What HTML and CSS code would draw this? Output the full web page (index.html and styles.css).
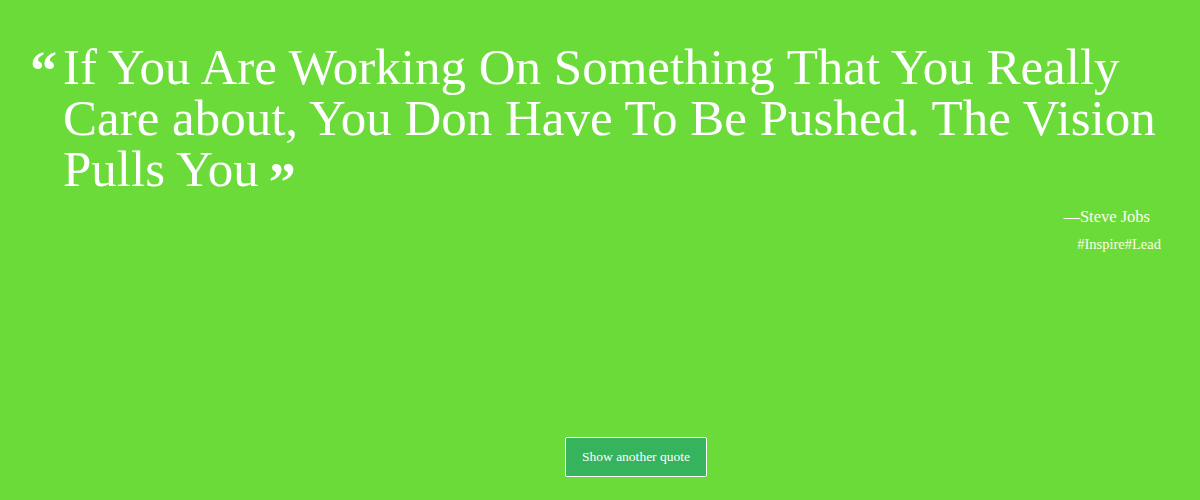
FILE: index.html
```html
<!DOCTYPE html>
<html>
<head>
<meta charset="utf-8">
<link rel="stylesheet" href="styles.css">
</head>
<body>
<main class="page">
  <section class="quote-box">
    <blockquote class="quote">
      <span class="mark open">&#8220;</span>
      <p class="quote-text">If You Are Working On Something That You Really Care about, You Don Have To Be Pushed. The Vision Pulls You<span class="mark close">&#8221;</span></p>
    </blockquote>
    <div class="author">—Steve Jobs</div>
    <div class="tags">#Inspire#Lead</div>
  </section>
  <div class="actions">
    <button class="btn">Show another quote</button>
  </div>
</main>
</body>
</html>
```
FILE: styles.css
```css
html, body {
  margin: 0;
  padding: 0;
}
body {
  background: #6bdb3a;
  color: #ffffff;
  font-family: "Liberation Serif", "Times New Roman", serif;
  width: 1200px;
  height: 500px;
  overflow: hidden;
}
.page {
  display: flex;
  flex-direction: column;
  height: 500px;
  box-sizing: border-box;
  padding: 42px 28px 23px 30px;
}
.quote-box {
  flex: 1;
}
.quote {
  margin: 0;
  display: flex;
  align-items: flex-start;
}
.mark {
  font-family: "Liberation Serif", serif;
  font-weight: bold;
  font-size: 54px;
  line-height: 1;
}
.open {
  width: 33px;
  flex: none;
  margin-top: 2px;
}
.quote-text {
  margin: 0;
  font-size: 51px;
  line-height: 51px;
}
.close {
  display: inline-block;
  line-height: 0;
  vertical-align: -14px;
  margin-left: 10px;
}
.author {
  text-align: right;
  font-size: 16.5px;
  margin-top: 12px;
  padding-right: 22px;
  color: #fffbe8;
}
.tags {
  text-align: right;
  font-size: 14.5px;
  margin-top: 9px;
  padding-right: 11px;
  color: #fffbe8;
}
.actions {
  display: flex;
  justify-content: center;
  padding-left: 70px;
}
.btn {
  width: 142px;
  height: 40px;
  background: #35b35d;
  color: #ffffff;
  border: 1px solid #ffffff;
  border-radius: 2px;
  font-family: "Liberation Serif", "Times New Roman", serif;
  font-size: 13.5px;
  padding: 0;
}
```
